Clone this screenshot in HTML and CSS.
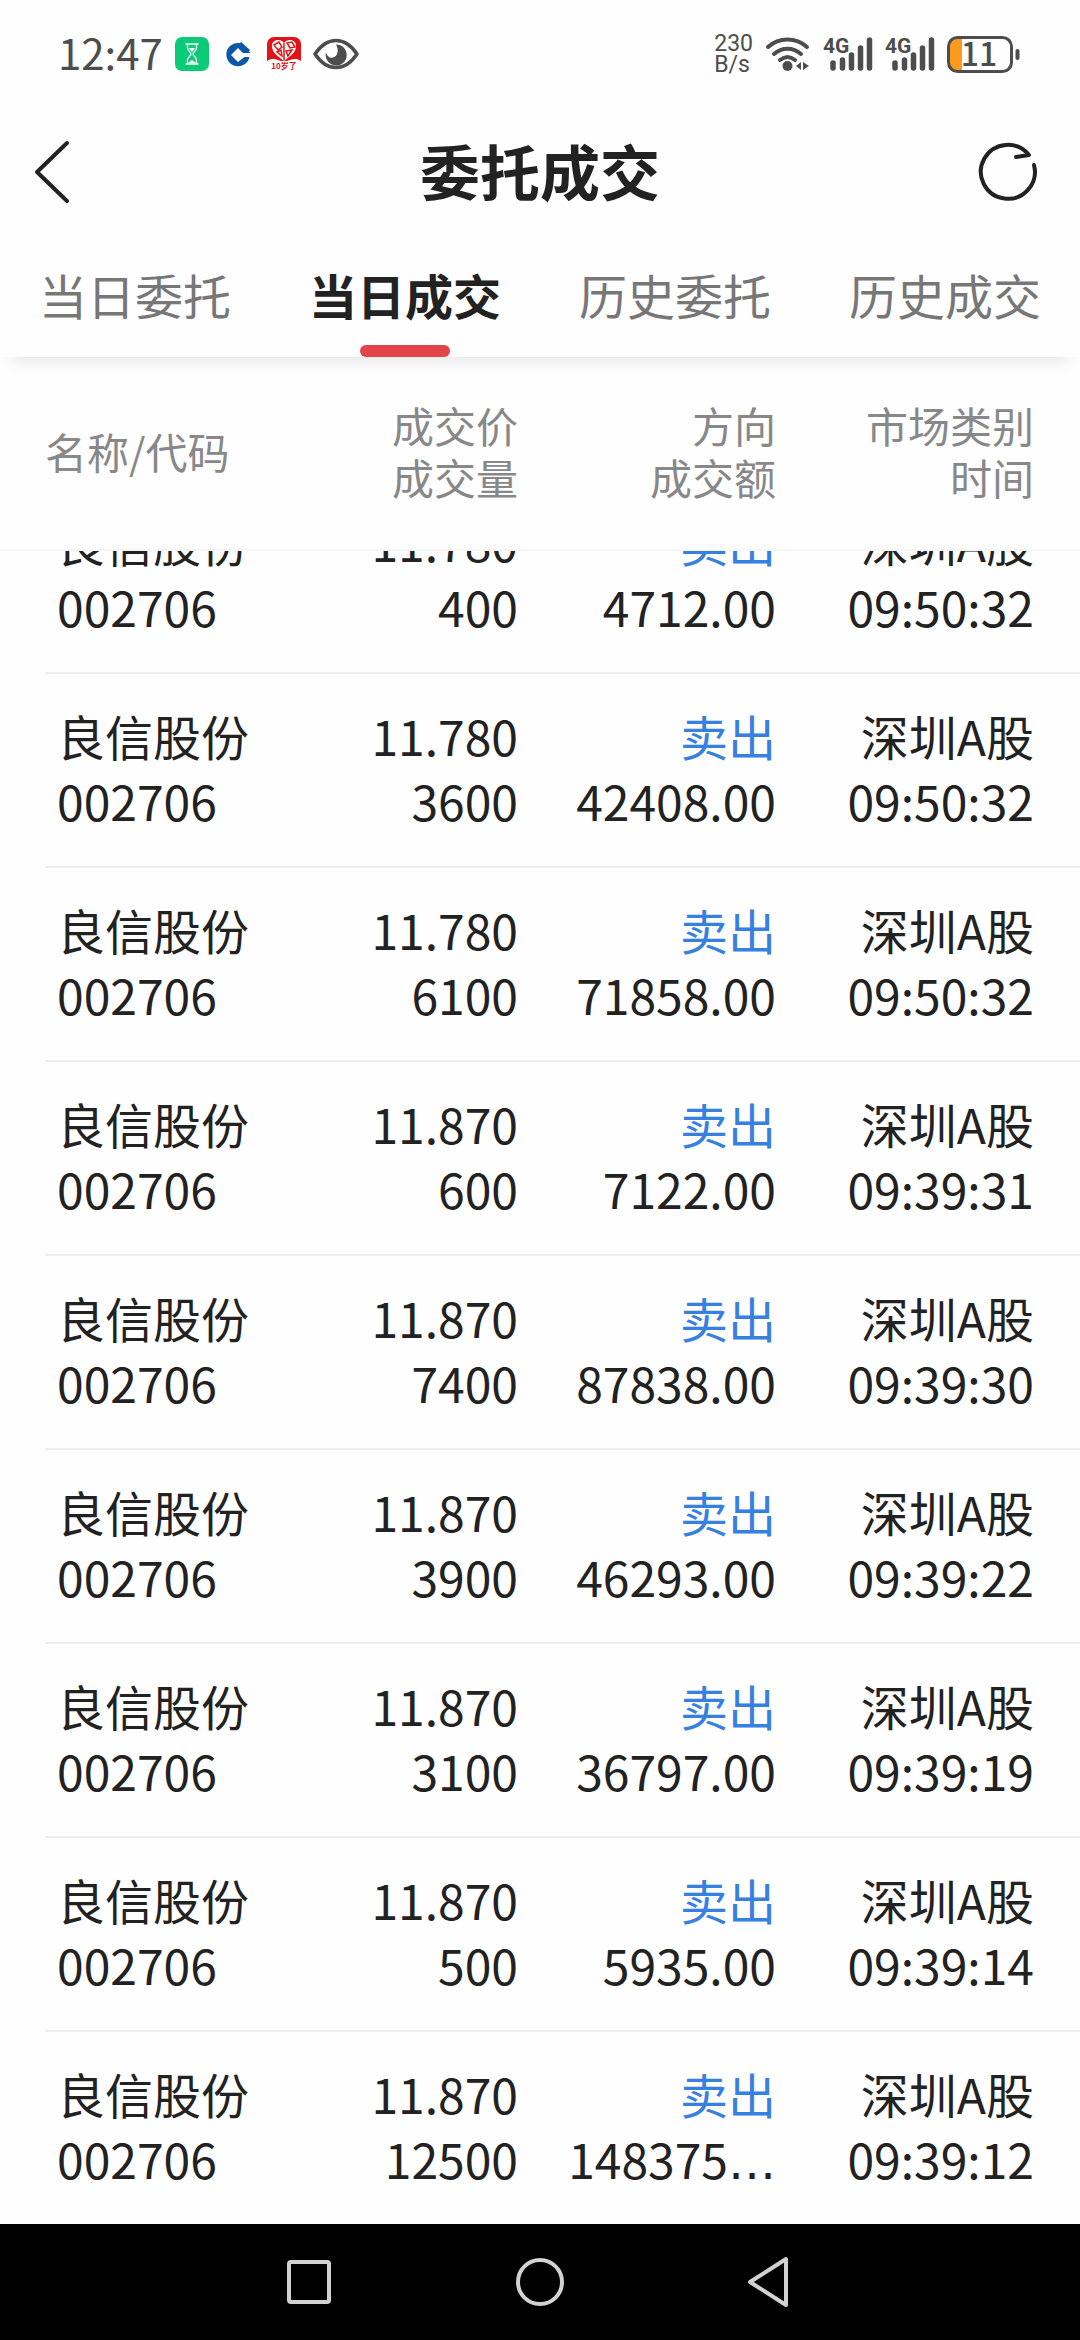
FILE: index.html
```html
<!DOCTYPE html>
<html lang="zh-CN">
<head>
<meta charset="utf-8">
<meta name="viewport" content="width=device-width, initial-scale=1">
<title>委托成交</title>
<link rel="stylesheet" href="styles.css">
</head>
<body>
<div class="status">
  <div class="status-side">
    <span class="clock">12:47</span>
    <svg width="34" height="34" viewBox="0 0 34 34" aria-hidden="true">
      <rect width="34" height="34" rx="7" fill="#0ccb78"/>
      <g fill="none" stroke="#fff" stroke-width="1.3">
        <path d="M10.500 7h13M10.500 27h13M12.500 7.500v3.500c0 3 3.500 4 3.500 6s-3.500 3-3.500 6v3.500M21.500 7.500v3.500c0 3-3.500 4-3.500 6s3.500 3 3.500 6v3.500"/>
      </g>
      <path d="M14 11h6l-3 4zM13 26l4-3 4 3z" fill="#fff"/>
    </svg>
    <svg width="34" height="34" viewBox="0 0 34 34" aria-hidden="true">
      <path d="M18.500 6A11.700 11.700 0 1 0 28.500 20h-5L17 25l-7-7 7-7 5 5h7.500z" fill="#0a58a6"/>
      <path d="M20 5l9 8-1.500 2-9-8.500z" fill="#0a58a6"/>
    </svg>
    <svg width="34" height="34" viewBox="0 0 34 34" aria-hidden="true">
      <path d="M7 0h20a7 7 0 0 1 7 7v17H0V7a7 7 0 0 1 7-7z" fill="#e01319"/>
      <path d="M0 24c6-4 10-1 17 1 7-2 11-5 17-1v2H0z" fill="#fff"/>
      <path d="M17 6c-3-5-13-4-12 4 .5 6 6 9 12 14 6-5 11.500-8 12-14 1-8-9-9-12-4z" fill="#fff"/>
      <path d="M7 8l5-3 3 5-4 3zM20 6l5-1 3 5-5 1zM10 15l4-2 1 6zM19 14l6-1-4 6zM17 6v17" fill="none" stroke="#e01319" stroke-width="1.500"/>
      <text class="badge-text" x="17" y="32" text-anchor="middle">10岁了</text>
    </svg>
    <svg width="46" height="34" viewBox="0 0 46 34" aria-hidden="true">
      <path d="M2 17C8 8 15 3.500 23 3.500S38 8 44 17C38 26 31 30.500 23 30.500S8 26 2 17z" fill="none" stroke="#4d4d4d" stroke-width="3.500" stroke-linejoin="round"/>
      <path d="M23 7.500a10.500 10.500 0 1 1-10 8c1 4 4 6 7 5 5-1 6-8 3-13z" fill="#4d4d4d"/>
    </svg>
  </div>
  <div class="status-side">
    <span class="speed">230<br>B/s</span>
    <svg width="46" height="36" viewBox="0 0 46 36" aria-hidden="true">
      <g fill="none" stroke="#4d4d4d" stroke-width="4" stroke-linecap="round">
        <path d="M3 11c11-10 28-10 39 0M9 18c8-7 19-7 27 0M15 24c5-4 10-4 15 0"/>
      </g>
      <circle cx="22.500" cy="30" r="5" fill="#4d4d4d"/>
      <path d="M36 26v8l-5-4zM38 26v8l6-4z" fill="#4d4d4d"/>
    </svg>
    <svg width="50" height="36" viewBox="0 0 50 36" aria-hidden="true">
      <text class="net-text" x="0" y="17">4G</text>
      <path d="M10 27v5M19.500 24v8M28.500 19v13M37.500 12v20M46.500 4v28" stroke="#4d4d4d" stroke-width="5.500" stroke-linecap="round"/>
    </svg>
    <svg width="50" height="36" viewBox="0 0 50 36" aria-hidden="true">
      <text class="net-text" x="0" y="17">4G</text>
      <path d="M10 27v5M19.500 24v8M28.500 19v13M37.500 12v20M46.500 4v28" stroke="#4d4d4d" stroke-width="5.500" stroke-linecap="round"/>
    </svg>
    <svg width="73" height="37" viewBox="0 0 73 37" aria-hidden="true">
      <path d="M9 2h6v33H9a7 7 0 0 1-7-7V9a7 7 0 0 1 7-7z" fill="#fb9b1e"/>
      <rect x="1.500" y="1.500" width="63" height="34" rx="9" fill="none" stroke="#4d4d4d" stroke-width="3"/>
      <path d="M70.500 15v7" stroke="#4d4d4d" stroke-width="4" stroke-linecap="round"/>
      <text class="battery-text" x="32" y="30" text-anchor="middle">11</text>
    </svg>
  </div>
</div>

<header class="appbar">
  <button class="icon-btn" type="button" aria-label="返回">
    <svg width="36" height="62" viewBox="0 0 36 62"><path d="M33 2L3 31l30 29" fill="none" stroke="#222" stroke-width="4" stroke-linecap="round" stroke-linejoin="round"/></svg>
  </button>
  <h1 class="title">委托成交</h1>
  <button class="icon-btn icon-btn-end" type="button" aria-label="刷新">
    <svg width="60" height="60" viewBox="0 0 60 60"><path d="M56 23A27 27 0 1 1 51 13l-13 2" fill="none" stroke="#222" stroke-width="4" stroke-linecap="round" stroke-linejoin="round"/></svg>
  </button>
</header>

<nav class="tabs">
  <a class="tab" href="#today-orders">当日委托</a>
  <a class="tab tab-active" href="#today-deals" aria-current="page">当日成交</a>
  <a class="tab" href="#history-orders">历史委托</a>
  <a class="tab" href="#history-deals">历史成交</a>
</nav>

<table class="deals">
  <thead>
    <tr class="head-row">
      <th>名称/代码</th>
      <th>成交价<br>成交量</th>
      <th>方向<br>成交额</th>
      <th>市场类别<br>时间</th>
    </tr>
  </thead>
  <tbody>
    <tr class="row"><td>良信股份<br>002706</td><td>11.780<br>400</td><td><span class="sell">卖出</span><br>4712.00</td><td>深圳A股<br>09:50:32</td></tr>
    <tr class="row"><td>良信股份<br>002706</td><td>11.780<br>3600</td><td><span class="sell">卖出</span><br>42408.00</td><td>深圳A股<br>09:50:32</td></tr>
    <tr class="row"><td>良信股份<br>002706</td><td>11.780<br>6100</td><td><span class="sell">卖出</span><br>71858.00</td><td>深圳A股<br>09:50:32</td></tr>
    <tr class="row"><td>良信股份<br>002706</td><td>11.870<br>600</td><td><span class="sell">卖出</span><br>7122.00</td><td>深圳A股<br>09:39:31</td></tr>
    <tr class="row"><td>良信股份<br>002706</td><td>11.870<br>7400</td><td><span class="sell">卖出</span><br>87838.00</td><td>深圳A股<br>09:39:30</td></tr>
    <tr class="row"><td>良信股份<br>002706</td><td>11.870<br>3900</td><td><span class="sell">卖出</span><br>46293.00</td><td>深圳A股<br>09:39:22</td></tr>
    <tr class="row"><td>良信股份<br>002706</td><td>11.870<br>3100</td><td><span class="sell">卖出</span><br>36797.00</td><td>深圳A股<br>09:39:19</td></tr>
    <tr class="row"><td>良信股份<br>002706</td><td>11.870<br>500</td><td><span class="sell">卖出</span><br>5935.00</td><td>深圳A股<br>09:39:14</td></tr>
    <tr class="row"><td>良信股份<br>002706</td><td>11.870<br>12500</td><td><span class="sell">卖出</span><br>148375<span class="more">…</span></td><td>深圳A股<br>09:39:12</td></tr>
  </tbody>
</table>

<div class="navbar">
  <button type="button" aria-label="最近任务">
    <svg width="54" height="54" viewBox="0 0 54 54"><rect x="7" y="7" width="40" height="40" rx="2" fill="none" stroke="#d2d2d2" stroke-width="4"/></svg>
  </button>
  <button type="button" aria-label="主页">
    <svg width="54" height="54" viewBox="0 0 54 54"><circle cx="27" cy="27" r="22" fill="none" stroke="#d2d2d2" stroke-width="4"/></svg>
  </button>
  <button type="button" aria-label="返回上一页">
    <svg width="54" height="54" viewBox="0 0 54 54"><path d="M42 4v46L6 27z" fill="none" stroke="#d2d2d2" stroke-width="4" stroke-linejoin="round"/></svg>
  </button>
</div>
</body>
</html>
```
FILE: styles.css
```css
* {
  box-sizing: border-box;
}

body {
  margin: 0;
  height: 100vh;
  display: flex;
  flex-direction: column;
  background: #fefefe;
  color: #222;
  font-family: "Noto Sans CJK SC", sans-serif;
  font-size: 48px;
}

svg {
  display: block;
  overflow: visible;
}

button {
  border: 0;
  padding: 0;
  background: none;
}

/* system status bar */
.status {
  flex: none;
  height: 108px;
  display: flex;
  align-items: center;
  justify-content: space-between;
  padding: 0 60px 0 58px;
  color: #4d4d4d;
}

.status-side {
  display: flex;
  align-items: center;
  gap: 12px;
}

.clock {
  padding-bottom: 4px;
  font-size: 42px;
  line-height: 48px;
}

.speed {
  font-family: Roboto, sans-serif;
  font-size: 23px;
  line-height: 21px;
}

.badge-text {
  font-size: 8px;
  font-weight: 700;
  fill: #e01319;
}

.net-text {
  font-family: Roboto, sans-serif;
  font-size: 21px;
  font-weight: 700;
  fill: #4d4d4d;
}

.battery-text {
  font-size: 32px;
  font-weight: 500;
  fill: #4d4d4d;
}

/* title bar */
.appbar {
  flex: none;
  height: 128px;
  display: grid;
  grid-template-columns: 1fr auto 1fr;
  align-items: center;
  padding: 0 42px 0 34px;
}

.title {
  margin: 0;
  padding: 0 0 4px 8px;
  font-size: 60px;
  line-height: 72px;
  font-weight: 700;
}

.icon-btn {
  justify-self: start;
}

.icon-btn-end {
  justify-self: end;
}

/* tabs */
.tabs {
  flex: none;
  display: grid;
  grid-template-columns: repeat(4, 1fr);
  box-shadow: 0 16px 16px -12px rgba(0, 0, 0, 0.1);
}

.tab {
  display: flex;
  flex-direction: column;
  align-items: center;
  padding-top: 22px;
  line-height: 72px;
  color: #777;
  text-decoration: none;
}

.tab::after {
  content: "";
  width: 90px;
  height: 12px;
  margin-top: 15px;
  border-radius: 6px;
}

.tab-active {
  color: #222;
  font-weight: 700;
}

.tab-active::after {
  background: #e2444a;
}

/* deals list */
.deals {
  flex: 1;
  min-height: 0;
  display: flex;
  flex-direction: column;
}

.deals thead {
  display: block;
  border-bottom: 2px solid #f6f6f6;
}

.deals tbody {
  flex: 1;
  min-height: 0;
  display: flex;
  flex-direction: column;
  justify-content: flex-end;
  overflow: hidden;
}

.head-row,
.row {
  display: grid;
  grid-template-columns: 5fr 6fr 6fr 6fr;
  align-items: center;
  margin-left: 45px;
  padding-right: 46px;
}

.head-row {
  padding-top: 42px;
  padding-bottom: 46px;
}

.deals th {
  padding: 0;
  font-size: 42px;
  line-height: 52px;
  font-weight: 400;
  color: #888;
  text-align: right;
}

.row {
  flex: none;
  padding-top: 29px;
  padding-bottom: 33px;
  border-bottom: 2px solid #eee;
}

.row:last-child {
  border-bottom: 0;
}

.deals td {
  padding: 0;
  line-height: 65px;
  text-align: right;
  white-space: nowrap;
}

.deals th:first-child,
.deals td:first-child {
  text-align: left;
}

.deals td:first-child {
  padding-left: 12px;
}

.sell {
  color: #3580e0;
}

/* baseline dots for a cut-off amount */
.more {
  font-family: "DejaVu Sans", sans-serif;
  line-height: 48px;
}

/* system navigation */
.navbar {
  flex: none;
  height: 116px;
  display: flex;
  align-items: center;
  justify-content: center;
  gap: 177px;
  background: #000;
}
```
